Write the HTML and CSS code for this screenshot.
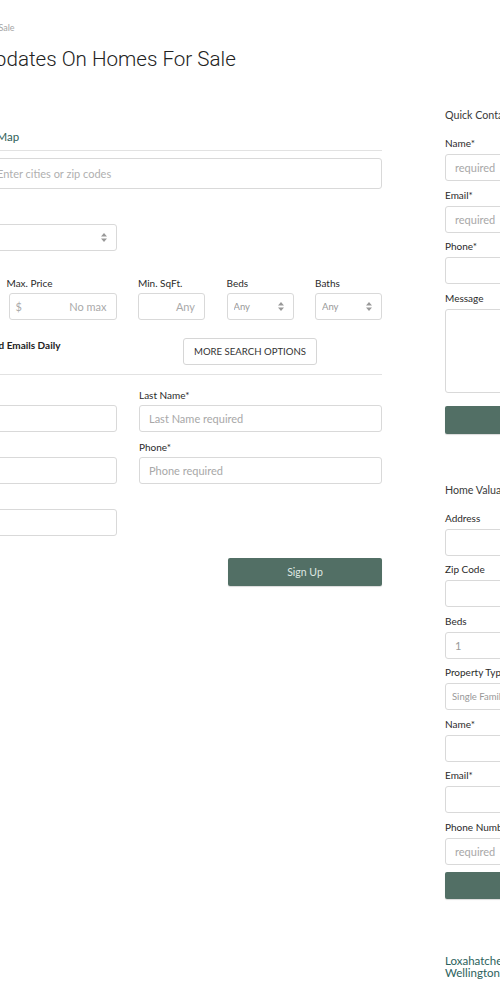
FILE: index.html
```html
<!DOCTYPE html>
<html lang="en">
<head>
  <meta charset="UTF-8">
  <meta name="viewport" content="width=device-width, initial-scale=1.0">
  <title>Homes For Sale</title>
  <link rel="stylesheet" href="styles.css">
</head>
<body>
  <div class="page">
    <div class="crumbs">Home &nbsp;/&nbsp; Search &nbsp;/&nbsp; Homes For Sale</div>
    <h1 class="title">Sign Up For Updates On Homes For Sale</h1>

    <div class="columns">
      <main class="search">
        <div class="tabs">
          <span class="tab">List View</span>
          <span class="tab active">Search By Map</span>
        </div>
        <div class="search-box">
          <span class="scope">Location</span>
          <input type="text" placeholder="Enter cities or zip codes">
        </div>

        <div class="half">
          <label class="label">Property Type</label>
          <div class="select-wrap">
            <select class="field"><option></option></select>
            <svg class="arrows" width="6" height="9" viewBox="0 0 6 9"><path d="M3 0 L6 3.5 H0 Z M3 9 L6 5.5 H0 Z" fill="#999"/></svg>
          </div>
        </div>

        <div class="price-row">
          <div class="group first">
            <label class="label">Min. Price</label>
            <div class="money"><span>$</span><span class="ph">No min</span></div>
          </div>
          <div class="group wide">
            <label class="label">Max. Price</label>
            <div class="money"><span>$</span><span class="ph">No max</span></div>
          </div>
          <div class="group">
            <label class="label">Min. SqFt.</label>
            <div class="money"><span></span><span class="ph">Any</span></div>
          </div>
          <div class="group">
            <label class="label">Beds</label>
            <div class="select-wrap">
              <select class="field small"><option>Any</option></select>
              <svg class="arrows" width="6" height="9" viewBox="0 0 6 9"><path d="M3 0 L6 3.5 H0 Z M3 9 L6 5.5 H0 Z" fill="#999"/></svg>
            </div>
          </div>
          <div class="group">
            <label class="label">Baths</label>
            <div class="select-wrap">
              <select class="field small"><option>Any</option></select>
              <svg class="arrows" width="6" height="9" viewBox="0 0 6 9"><path d="M3 0 L6 3.5 H0 Z M3 9 L6 5.5 H0 Z" fill="#999"/></svg>
            </div>
          </div>
        </div>

        <div class="options-row">
          <label class="daily"><input type="checkbox" checked> Email New Listings &middot; Send Emails Daily</label>
          <button class="more">MORE SEARCH OPTIONS</button>
        </div>

        <div class="contact-grid">
          <div class="group">
            <label class="label">First Name*</label>
            <input class="field" type="text" placeholder="">
          </div>
          <div class="group">
            <label class="label">Last Name*</label>
            <input class="field" type="text" placeholder="Last Name required">
          </div>
          <div class="group">
            <label class="label">Email*</label>
            <input class="field" type="text" placeholder="">
          </div>
          <div class="group">
            <label class="label">Phone*</label>
            <input class="field" type="text" placeholder="Phone required">
          </div>
          <div class="group">
            <label class="label">Comments</label>
            <input class="field" type="text" placeholder="">
          </div>
        </div>
        <div class="submit-row">
          <button class="btn">Sign Up</button>
        </div>
      </main>

      <aside class="sidebar">
        <h3 class="side-title">Quick Contact</h3>
        <div class="side-group">
          <label class="label">Name*</label>
          <input class="field" type="text" placeholder="required">
        </div>
        <div class="side-group">
          <label class="label">Email*</label>
          <input class="field" type="text" placeholder="required">
        </div>
        <div class="side-group">
          <label class="label">Phone*</label>
          <input class="field" type="text">
        </div>
        <div class="side-group">
          <label class="label">Message</label>
          <textarea class="field area"></textarea>
        </div>
        <button class="btn side-btn send">Send</button>

        <h3 class="side-title valuation">Home Valuation</h3>
        <div class="side-group">
          <label class="label">Address</label>
          <input class="field" type="text">
        </div>
        <div class="side-group">
          <label class="label">Zip Code</label>
          <input class="field" type="text">
        </div>
        <div class="side-group">
          <label class="label">Beds</label>
          <input class="field" type="text" value="1">
        </div>
        <div class="side-group">
          <label class="label">Property Type</label>
          <div class="select-wrap">
            <select class="field small"><option>Single Family</option></select>
            <svg class="arrows" width="6" height="9" viewBox="0 0 6 9"><path d="M3 0 L6 3.5 H0 Z M3 9 L6 5.5 H0 Z" fill="#999"/></svg>
          </div>
        </div>
        <div class="side-group">
          <label class="label">Name*</label>
          <input class="field" type="text">
        </div>
        <div class="side-group">
          <label class="label">Email*</label>
          <input class="field" type="text">
        </div>
        <div class="side-group">
          <label class="label">Phone Number</label>
          <input class="field" type="text" placeholder="required">
        </div>
        <button class="btn side-btn value">Get Value</button>

        <div class="areas">
          <a href="#">Loxahatchee</a>
          <a href="#">Wellington</a>
        </div>
      </aside>
    </div>
  </div>
</body>
</html>
```

FILE: styles.css
```css
/* reset */
*,
*::before,
*::after {
  box-sizing: border-box;
}
html,
body {
  overflow-x: hidden;
}
body {
  margin: 0;
  background: #fff;
  color: #333;
  font-family: Lato, "Liberation Sans", sans-serif;
}
input,
select,
textarea,
button {
  font: inherit;
  margin: 0;
}

/* page */
.page {
  width: 760px;
  margin-left: -126px;
}
.crumbs {
  padding-top: 22px;
  padding-left: 2px;
  font-size: 9px;
  line-height: 11px;
  color: #a6a6a6;
}
.title {
  margin: 13px 0 0 -2px;
  font-family: Roboto, "Liberation Sans", sans-serif;
  font-weight: 300;
  font-size: 20.6px;
  line-height: 26px;
  color: #222;
}
.columns {
  display: flex;
  gap: 63px;
  margin-top: 36px;
}
.search {
  width: 508px;
  flex: none;
  padding-top: 18px;
}
.sidebar {
  width: 230px;
  flex: none;
}

/* fields */
.label {
  display: block;
  font-size: 10px;
  line-height: 14px;
  color: #2a2a2a;
  margin-bottom: 3px;
}
.field {
  display: block;
  width: 100%;
  height: 27px;
  padding: 0 9px;
  border: 1px solid #d9d9d9;
  border-radius: 3px;
  background: #fff;
  font-size: 11px;
  color: #999;
  outline: none;
}
.field::placeholder {
  color: #a8a8a8;
}
select.field {
  appearance: none;
  -webkit-appearance: none;
}
.field.small {
  font-size: 9.5px;
  padding: 0 6px;
}
.select-wrap {
  position: relative;
}
.select-wrap .arrows {
  position: absolute;
  right: 10px;
  top: 9px;
}

/* search */
.tabs {
  display: flex;
  gap: 24px;
  padding: 2px 0 4px;
  border-bottom: 1px solid #e2e2e2;
  font-size: 11.5px;
  line-height: 18px;
}
.tab {
  color: #888;
}
.tab.active {
  color: #2f5e58;
}
.search-box {
  display: flex;
  align-items: center;
  height: 31px;
  margin-top: 7px;
  border: 1px solid #d9d9d9;
  border-radius: 3px;
}
.scope {
  width: 122px;
  flex: none;
  padding-left: 10px;
  font-size: 11px;
  color: #777;
}
.search-box input {
  flex: 1;
  height: 100%;
  padding: 0;
  border: 0;
  outline: none;
  background: transparent;
  font-size: 11px;
}
.search-box input::placeholder {
  color: #b0b0b0;
}
.half {
  width: 243px;
  margin-top: 18px;
}
.price-row {
  display: flex;
  gap: 21.5px;
  margin-top: 25px;
}
.group {
  min-width: 0;
}
.price-row .group {
  width: 67px;
  flex: none;
}
.price-row .group.wide {
  width: 108px;
}
.price-row .group.wide .label {
  margin-left: -2px;
}
.price-row .group.first {
  width: auto;
  flex: 1;
}
.money {
  display: flex;
  justify-content: space-between;
  align-items: center;
  height: 27px;
  padding: 0 9px 0 6px;
  border: 1px solid #d9d9d9;
  border-radius: 3px;
  font-size: 11px;
  color: #aaa;
}
.options-row {
  display: flex;
  align-items: center;
  gap: 20px;
  margin-top: 18px;
  padding-bottom: 9px;
  border-bottom: 1px solid #e2e2e2;
}
.daily {
  display: flex;
  align-items: center;
  gap: 6px;
  width: 289px;
  flex: none;
  font-size: 10px;
  font-weight: 700;
  color: #222;
  margin-top: -14px;
}
.daily input {
  width: 11px;
  height: 11px;
}
.more {
  height: 27px;
  padding: 0 10px;
  border: 1px solid #d6d6d6;
  border-radius: 3px;
  background: #fff;
  font-size: 9.6px;
  color: #333;
}
.contact-grid {
  display: grid;
  grid-template-columns: 243px 243px;
  column-gap: 22px;
  row-gap: 8px;
  margin-top: 13px;
}
.submit-row {
  display: flex;
  justify-content: flex-end;
  margin-top: 22px;
}
.btn {
  width: 154px;
  height: 28px;
  border: 0;
  border-radius: 2px;
  background: #526f65;
  color: #dfe7e3;
  font-size: 10.5px;
  box-shadow: 0 1px 1px rgba(0, 0, 0, 0.15);
}

/* sidebar */
.side-title {
  margin: 0;
  font-size: 10.7px;
  font-weight: 400;
  line-height: 16px;
  color: #3a3a3a;
}
.sidebar > .side-title:first-child {
  margin-top: -1px;
}
.side-title + .side-group {
  margin-top: 14px;
}
.side-title.valuation + .side-group {
  margin-top: 14px;
}
.side-group {
  margin-bottom: 7.5px;
}
.side-group .label {
  line-height: 12px;
  margin-bottom: 5px;
}
.field.area {
  height: 84px;
  resize: none;
}
.side-btn {
  width: 100%;
}
.side-btn.send {
  margin-top: 5.5px;
}
.side-btn.value {
  margin-top: 0;
  height: 27px;
}
.side-title.valuation {
  margin-top: 48px;
}
.areas {
  display: flex;
  flex-direction: column;
  margin-top: 56px;
  font-size: 11.5px;
  line-height: 12px;
}
.areas a {
  color: #2c625d;
  text-decoration: none;
}
```
